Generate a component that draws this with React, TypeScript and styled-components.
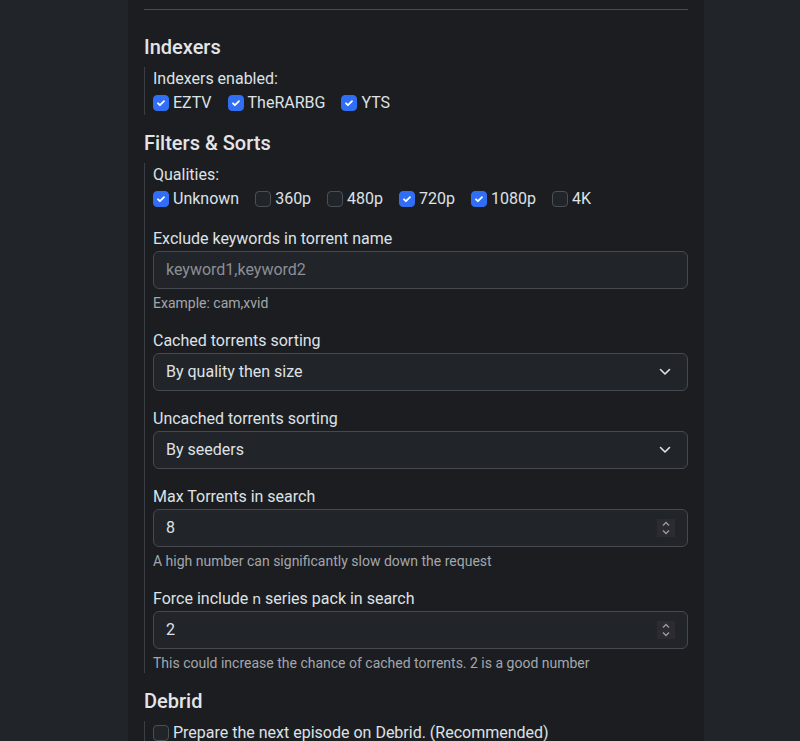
import * as React from "react";
import styled, {createGlobalStyle} from "styled-components";

const GlobalStyle = createGlobalStyle`
  html, body {
    margin: 0;
    padding: 0;
    background: #212529;
  }
  body {
    font-family: Roboto, "Liberation Sans", Arial, sans-serif;
    color: #dee2e6;
    font-size: 16px;
  }
`

interface CheckProps {
    label: string
    checked?: boolean
}

function Check(props: CheckProps) {
    const {label, checked} = props
    return (
        <CheckItem>
            <Box $checked={!!checked}>
                {checked && (
                    <svg width="12" height="12" viewBox="0 0 20 20">
                        <path d="M5 10.5l3.2 3.2L15 7" fill="none" stroke="#fff" strokeWidth="3"
                              strokeLinecap="round" strokeLinejoin="round"/>
                    </svg>
                )}
            </Box>
            <span>{label}</span>
        </CheckItem>
    )
}

function Chevron() {
    return (
        <svg width="12" height="8" viewBox="0 0 12 8">
            <path d="M1.5 1.5L6 6l4.5-4.5" fill="none" stroke="#dee2e6" strokeWidth="1.6"
                  strokeLinecap="round" strokeLinejoin="round"/>
        </svg>
    )
}

function Spinner() {
    return (
        <SpinBox>
            <svg width="10" height="16" viewBox="0 0 10 16">
                <path d="M2 5.5L5 2.5l3 3" fill="none" stroke="#9d9ca3" strokeWidth="1.3"/>
                <path d="M2 10.5L5 13.5l3-3" fill="none" stroke="#9d9ca3" strokeWidth="1.3"/>
            </svg>
        </SpinBox>
    )
}

const qualities = [
    {label: "Unknown", checked: true},
    {label: "360p", checked: false},
    {label: "480p", checked: false},
    {label: "720p", checked: true},
    {label: "1080p", checked: true},
    {label: "4K", checked: false},
]

export default function App() {
    return (
        <Page>
            <GlobalStyle/>
            <Card>
                <Divider/>

                <SectionTitle>Indexers</SectionTitle>
                <Group>
                    <Label>Indexers enabled:</Label>
                    <CheckRow>
                        <Check label="EZTV" checked/>
                        <Check label="TheRARBG" checked/>
                        <Check label="YTS" checked/>
                    </CheckRow>
                </Group>

                <SectionTitle>Filters &amp; Sorts</SectionTitle>
                <Group>
                    <Field>
                        <Label>Qualities:</Label>
                        <CheckRow>
                            {qualities.map(q => <Check key={q.label} label={q.label} checked={q.checked}/>)}
                        </CheckRow>
                    </Field>

                    <Field>
                        <Label>Exclude keywords in torrent name</Label>
                        <Control>
                            <Placeholder>keyword1,keyword2</Placeholder>
                        </Control>
                        <Help>Example: cam,xvid</Help>
                    </Field>

                    <Field>
                        <Label>Cached torrents sorting</Label>
                        <Control>
                            <span>By quality then size</span>
                            <Chevron/>
                        </Control>
                    </Field>

                    <Field>
                        <Label>Uncached torrents sorting</Label>
                        <Control>
                            <span>By seeders</span>
                            <Chevron/>
                        </Control>
                    </Field>

                    <Field>
                        <Label>Max Torrents in search</Label>
                        <Control $number>
                            <span>8</span>
                            <Spinner/>
                        </Control>
                        <Help>A high number can significantly slow down the request</Help>
                    </Field>

                    <Field>
                        <Label>Force include <Code>n</Code> series pack in search</Label>
                        <Control $number>
                            <span>2</span>
                            <Spinner/>
                        </Control>
                        <Help>This could increase the chance of cached torrents. 2 is a good number</Help>
                    </Field>
                </Group>

                <SectionTitle>Debrid</SectionTitle>
                <Group>
                    <Check label="Prepare the next episode on Debrid. (Recommended)"/>
                </Group>
            </Card>
        </Page>
    )
}

const Page = styled.div`
  height: 741px;
  overflow: hidden;
  padding-left: 128px;
`

const Card = styled.div`
  width: 576px;
  box-sizing: border-box;
  min-height: 741px;
  background: #1c1d21;
  padding: 9px 16px 0;
`

const Divider = styled.div`
  height: 1px;
  background: #4a4d52;
  margin-bottom: 25px;
`

const SectionTitle = styled.h5`
  margin: 0 0 8px;
  font-size: 20px;
  font-weight: 500;
  line-height: 24px;
  color: #e3e5e8;
`

const Group = styled.div`
  border-left: 1px solid #3b3e43;
  padding-left: 8px;
  margin-bottom: 16px;
`

const Field = styled.div`
  margin-bottom: 16px;

  &:last-child {
    margin-bottom: 0;
  }
`

const Label = styled.div`
  line-height: 24px;
  color: #dee2e6;
`

const Code = styled.code`
  font-family: "DejaVu Sans", sans-serif;
  font-size: 14px;
`

const CheckRow = styled.div`
  display: flex;
  flex-wrap: wrap;
  column-gap: 16px;
`

const CheckItem = styled.label`
  display: flex;
  align-items: center;
  gap: 4px;
  line-height: 24px;
  color: #dee2e6;
`

const Box = styled.span<{ $checked: boolean }>`
  box-sizing: border-box;
  width: 16px;
  height: 16px;
  border-radius: 4px;
  display: flex;
  align-items: center;
  justify-content: center;
  background: ${p => p.$checked ? "#2f6ef5" : "#212529"};
  border: 1px solid ${p => p.$checked ? "#2f6ef5" : "#4b5056"};
`

const Control = styled.div<{ $number?: boolean }>`
  box-sizing: border-box;
  height: 38px;
  width: 100%;
  display: flex;
  align-items: center;
  justify-content: space-between;
  padding: ${p => p.$number ? "0 12px 0 12px" : "0 16px 0 12px"};
  background: #212429;
  border: 1px solid #464a50;
  border-radius: 6px;
  color: #dee2e6;
  line-height: 24px;
`

const Placeholder = styled.span`
  color: #8c8f94;
`

const SpinBox = styled.div`
  width: 18px;
  height: 18px;
  display: flex;
  align-items: center;
  justify-content: center;
  background: #2d2b32;
`

const Help = styled.div`
  margin-top: 4px;
  font-size: 14px;
  line-height: 20px;
  color: #a3a7ab;
`
